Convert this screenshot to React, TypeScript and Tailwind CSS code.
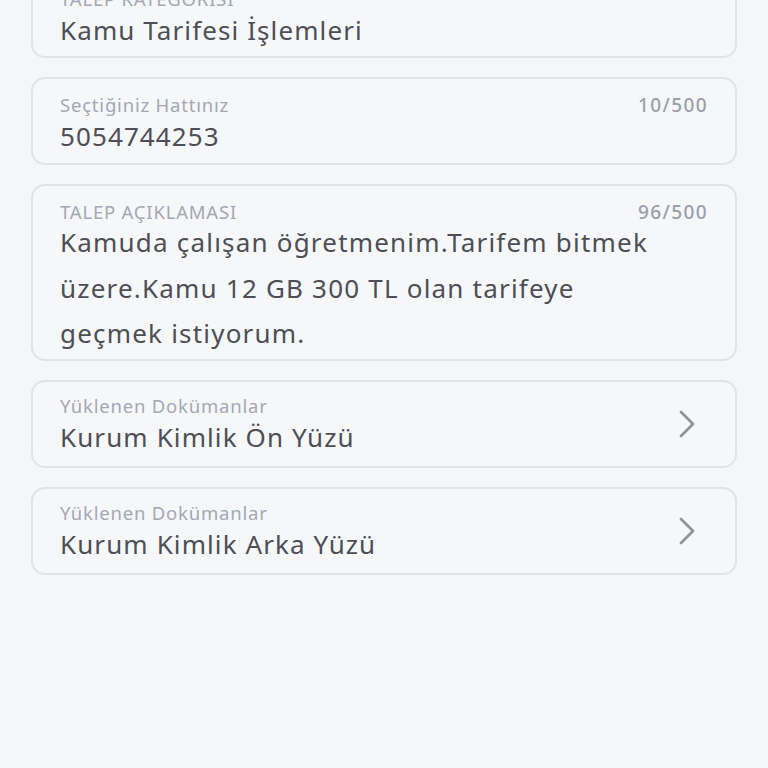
const font = { fontFamily: '"Noto Sans", "Open Sans", sans-serif' };

function Card({ children, className = "" }: { children: React.ReactNode; className?: string }) {
  return (
    <div className={`rounded-[14px] border-[2.5px] border-[#e1e3e8] bg-[#f6f7f9] pl-[27px] pr-[27px] ${className}`}>
      {children}
    </div>
  );
}

function Chevron() {
  return (
    <svg width="18" height="30" viewBox="0 0 18 30" className="mr-[12px]" fill="none">
      <polyline points="3,3 15,15 3,27" stroke="#8e939f" strokeWidth="2.8" strokeLinecap="round" strokeLinejoin="round" />
    </svg>
  );
}

const label = "text-[18.5px] leading-[24px] tracking-[0.8px] text-[#a3a8b5]";
const counter = "text-[19px] leading-[24px] tracking-[1.4px] font-medium text-[#9a9fac]";
const value = "text-[26px] leading-[38px] tracking-[1.1px] text-[#4c4f55]";

export default function App() {
  return (
    <div className="min-h-[768px] w-full overflow-hidden bg-[#f5f6f8]" style={font}>
      <div className="flex flex-col gap-[19px] px-[31px]">
        <Card className="mt-[-30px] h-[88px] pt-[15px]">
          <div className={label}>TALEP KATEGORİSİ</div>
          <div className={value}>Kamu Tarifesi İşlemleri</div>
        </Card>

        <Card className="h-[88px] pt-[14px]">
          <div className="flex items-center justify-between">
            <span className={label}>Seçtiğiniz Hattınız</span>
            <span className={counter}>10/500</span>
          </div>
          <div className={value}>5054744253</div>
        </Card>

        <Card className="h-[177px] pt-[14px]">
          <div className="flex items-center justify-between">
            <span className={label}>TALEP AÇIKLAMASI</span>
            <span className={counter}>96/500</span>
          </div>
          <div className="mt-[-4px] text-[26px] leading-[45.5px] tracking-[1.2px] text-[#4c4f55]">
            <div>Kamuda çalışan öğretmenim.Tarifem bitmek</div>
            <div>üzere.Kamu 12 GB 300 TL olan tarifeye</div>
            <div>geçmek istiyorum.</div>
          </div>
        </Card>

        {["Kurum Kimlik Ön Yüzü", "Kurum Kimlik Arka Yüzü"].map((doc) => (
          <Card key={doc} className="flex h-[88px] items-center justify-between">
            <div className="pt-[1px]">
              <div className={label}>Yüklenen Dokümanlar</div>
              <div className={value}>{doc}</div>
            </div>
            <Chevron />
          </Card>
        ))}
      </div>
    </div>
  );
}
